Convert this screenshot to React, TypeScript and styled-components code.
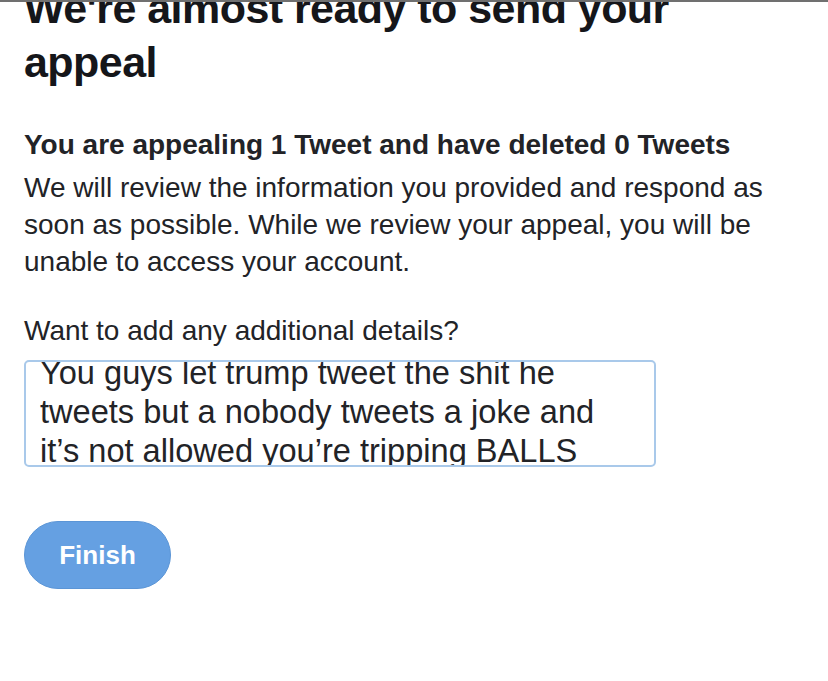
import React from "react";
import styled, { createGlobalStyle } from "styled-components";

const Global = createGlobalStyle`
  html, body { margin: 0; padding: 0; background: #ffffff; }
  body { font-family: "Liberation Sans", Arial, sans-serif; overflow: hidden; }
  * { box-sizing: border-box; }
`;

const Screen = styled.div`
  width: 828px;
  height: 681px;
  overflow: hidden;
  border-top: 2px solid #707070;
  background: #fff;
`;

const Content = styled.div`
  display: flex;
  flex-direction: column;
  padding: 0 24px;
  margin-top: -21px;
`;

const Title = styled.h1`
  margin: 0;
  font-size: 43px;
  line-height: 54px;
  font-weight: 700;
  color: #15161a;
  letter-spacing: -0.55px;
  white-space: nowrap;
`;

const SubTitle = styled.h2`
  margin: 38px 0 0;
  font-size: 28px;
  line-height: 36px;
  font-weight: 700;
  color: #222327;
  white-space: nowrap;
`;

const Body = styled.p`
  margin: 6px 0 0;
  font-size: 28px;
  line-height: 37px;
  color: #222327;
  white-space: nowrap;
`;

const Label = styled.label`
  display: block;
  margin: 33px 0 0;
  font-size: 28px;
  line-height: 36px;
  color: #222327;
`;

const Field = styled.div`
  margin-top: 11px;
  width: 632px;
  height: 107px;
  border: 2px solid #a9c9ea;
  border-radius: 5px;
  overflow: hidden;
  padding: 0 14px;
`;

const FieldText = styled.div`
  margin-top: -9px;
  font-size: 32.6px;
  line-height: 39px;
  color: #222327;
  white-space: nowrap;
`;

const Finish = styled.button`
  margin-top: 54px;
  align-self: flex-start;
  width: 147px;
  height: 68px;
  border-radius: 34px;
  border: 1px solid #5b95d6;
  background: #65a0e2;
  color: #ffffff;
  font-family: "Liberation Sans", Arial, sans-serif;
  font-size: 26px;
  font-weight: 700;
  padding: 0;
`;

export default function App() {
  return (
    <>
      <Global />
      <Screen>
        <Content>
          <Title>
            We're almost ready to send your
            <br />
            appeal
          </Title>
          <SubTitle>You are appealing 1 Tweet and have deleted 0 Tweets</SubTitle>
          <Body>
            We will review the information you provided and respond as
            <br />
            soon as possible. While we review your appeal, you will be
            <br />
            unable to access your account.
          </Body>
          <Label>Want to add any additional details?</Label>
          <Field>
            <FieldText>
              You guys let trump tweet the shit he
              <br />
              tweets but a nobody tweets a joke and
              <br />
              it’s not allowed you’re tripping BALLS
            </FieldText>
          </Field>
          <Finish>Finish</Finish>
        </Content>
      </Screen>
    </>
  );
}
